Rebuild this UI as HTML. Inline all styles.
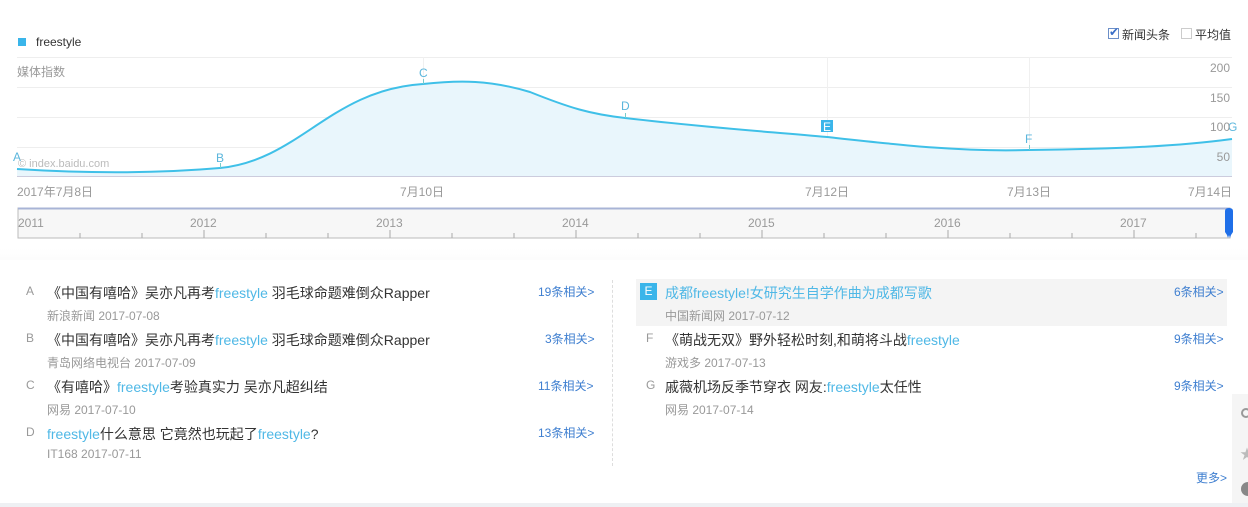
<!DOCTYPE html>
<html><head><meta charset="utf-8"><style>
body{margin:0;width:1248px;height:507px;overflow:hidden;background:#fff;font-family:"Liberation Sans","Noto Sans CJK SC",sans-serif;position:relative}
.a{position:absolute;white-space:nowrap}
.g{color:#999;font-size:12px}
.t{font-size:14px;color:#333}
.k{color:#4fb8e6}
.s{font-size:12px;color:#999}
.r{font-size:12px;color:#3f7fd0}
.L{font-size:12px;color:#999}
</style></head><body>
<div class="a" style="left:18px;top:38px;width:8px;height:8px;background:#3ab5ea"></div>
<div class="a" style="left:36px;top:35px;font-size:12px;color:#333">freestyle</div>
<div class="a" style="left:1108px;top:28px;width:11px;height:11px;border:1px solid #6c8fc8;box-sizing:border-box"></div>
<div class="a" style="left:1109px;top:25px;font-size:12px;color:#3a6fc8">✔</div>
<div class="a" style="left:1122px;top:26px;font-size:12px;color:#333">新闻头条</div>
<div class="a" style="left:1181px;top:28px;width:11px;height:11px;border:1px solid #ccc;box-sizing:border-box"></div>
<div class="a" style="left:1195px;top:26px;font-size:12px;color:#333">平均值</div>
<svg class="a" style="left:0;top:0" width="1248" height="250">
<g stroke="#eee" stroke-width="1">
<line x1="17" y1="57.5" x2="1232" y2="57.5"/><line x1="17" y1="87.5" x2="1232" y2="87.5"/>
<line x1="17" y1="117.5" x2="1232" y2="117.5"/><line x1="17" y1="147.5" x2="1232" y2="147.5"/>
</g>
<g stroke="#f0f0f0" stroke-width="1">
<line x1="423.5" y1="57" x2="423.5" y2="176"/><line x1="827.5" y1="57" x2="827.5" y2="176"/><line x1="1029.5" y1="57" x2="1029.5" y2="176"/>
</g>
<path d="M17 169 C80 173 150 174 220 168 C300 160 330 90 423 84 C460 80 490 80 530 92 C570 108 590 114 625 118 C700 127 760 131 827 137 C900 145 960 152 1029 150 C1120 149 1180 146 1232 139 L1232 176 L17 176Z" fill="#e9f6fc"/>
<path d="M17 169 C80 173 150 174 220 168 C300 160 330 90 423 84 C460 80 490 80 530 92 C570 108 590 114 625 118 C700 127 760 131 827 137 C900 145 960 152 1029 150 C1120 149 1180 146 1232 139" fill="none" stroke="#3fc0e8" stroke-width="2"/>
<line x1="17" y1="176.5" x2="1232" y2="176.5" stroke="#ccd" />
<g stroke="#7cc" stroke-width="1"><line x1="220.5" y1="163" x2="220.5" y2="168"/><line x1="423.5" y1="79" x2="423.5" y2="84"/><line x1="625.5" y1="113" x2="625.5" y2="118"/><line x1="1029.5" y1="145" x2="1029.5" y2="150"/></g>
<g font-size="12" fill="#5bb6dc" font-family="Liberation Sans"><text x="13" y="161">A</text><text x="216" y="162">B</text><text x="419" y="77">C</text><text x="621" y="110">D</text><text x="1025" y="143">F</text><text x="1228" y="131">G</text></g>
<rect x="821" y="120" width="12" height="12" fill="#3ab5ea"/><text x="823" y="131" font-size="12" fill="#fff" font-family="Liberation Sans">E</text>
<g font-size="12" fill="#999" font-family="Liberation Sans" text-anchor="end"><text x="1230" y="72">200</text><text x="1230" y="102">150</text><text x="1230" y="131">100</text><text x="1230" y="161">50</text></g>
<rect x="18" y="208" width="1212" height="30" fill="#f7f7f7" stroke="#bbb"/>
<line x1="18" y1="208.5" x2="1230" y2="208.5" stroke="#a8b4d6" stroke-width="2"/>
<g stroke="#aaa">
<path d="M80 238v-5M142 238v-5M266 238v-5M328 238v-5M452 238v-5M514 238v-5M638 238v-5M700 238v-5M824 238v-5M886 238v-5M1010 238v-5M1072 238v-5M1196 238v-5"/>
<path d="M204 238v-8M390 238v-8M576 238v-8M762 238v-8M948 238v-8M1134 238v-8"/>
</g>
<g font-size="12" fill="#999" font-family="Liberation Sans"><text x="18" y="227">2011</text><text x="190" y="227">2012</text><text x="376" y="227">2013</text><text x="562" y="227">2014</text><text x="748" y="227">2015</text><text x="934" y="227">2016</text><text x="1120" y="227">2017</text></g>
<path d="M1225 211 q0-3 4-3 q4 0 4 3 v21 l-2 3 -1 3 -1-3 -1 3 -1-3 -2-3z" fill="#1f6fe8"/>
</svg>
<div class="a g" style="left:17px;top:63px">媒体指数</div>
<div class="a" style="left:18px;top:158px;font-size:11px;color:#bbb">© index.baidu.com</div>
<div class="a g" style="left:17px;top:183px">2017年7月8日</div>
<div class="a g" style="left:400px;top:183px">7月10日</div>
<div class="a g" style="left:805px;top:183px">7月12日</div>
<div class="a g" style="left:1007px;top:183px">7月13日</div>
<div class="a g" style="left:1188px;top:183px">7月14日</div>
<div class="a" style="left:0;top:248px;width:1248px;height:12px;background:linear-gradient(#fff,#fcfcfc)"></div>

<div class="a" style="left:612px;top:280px;height:186px;border-left:1px dashed #ddd"></div>
<div class="a" style="left:636px;top:279px;width:591px;height:47px;background:#f4f4f4"></div>

<div class="a L" style="left:26px;top:284px">A</div>
<div class="a t" style="left:47px;top:283px">《中国有嘻哈》吴亦凡再考<span class="k">freestyle</span> 羽毛球命题难倒众Rapper</div>
<div class="a s" style="left:47px;top:307px">新浪新闻 2017-07-08</div>
<div class="a r" style="left:538px;top:283px">19条相关&gt;</div>
<div class="a L" style="left:26px;top:331px">B</div>
<div class="a t" style="left:47px;top:330px">《中国有嘻哈》吴亦凡再考<span class="k">freestyle</span> 羽毛球命题难倒众Rapper</div>
<div class="a s" style="left:47px;top:354px">青岛网络电视台 2017-07-09</div>
<div class="a r" style="left:545px;top:330px">3条相关&gt;</div>
<div class="a L" style="left:26px;top:378px">C</div>
<div class="a t" style="left:47px;top:377px">《有嘻哈》<span class="k">freestyle</span>考验真实力 吴亦凡超纠结</div>
<div class="a s" style="left:47px;top:401px">网易 2017-07-10</div>
<div class="a r" style="left:538px;top:377px">11条相关&gt;</div>
<div class="a L" style="left:26px;top:425px">D</div>
<div class="a t" style="left:47px;top:424px"><span class="k">freestyle</span>什么意思 它竟然也玩起了<span class="k">freestyle</span>?</div>
<div class="a s" style="left:47px;top:447px">IT168 2017-07-11</div>
<div class="a r" style="left:538px;top:424px">13条相关&gt;</div>

<div class="a" style="left:640px;top:283px;width:17px;height:17px;background:#3ab5ea;color:#fff;font-size:12px;text-align:center;line-height:17px">E</div>
<div class="a t k" style="left:665px;top:283px">成都freestyle!女研究生自学作曲为成都写歌</div>
<div class="a s" style="left:665px;top:307px">中国新闻网 2017-07-12</div>
<div class="a r" style="left:1174px;top:283px">6条相关&gt;</div>
<div class="a L" style="left:646px;top:331px">F</div>
<div class="a t" style="left:665px;top:330px">《萌战无双》野外轻松时刻,和萌将斗战<span class="k">freestyle</span></div>
<div class="a s" style="left:665px;top:354px">游戏多 2017-07-13</div>
<div class="a r" style="left:1174px;top:330px">9条相关&gt;</div>
<div class="a L" style="left:646px;top:378px">G</div>
<div class="a t" style="left:665px;top:377px">戚薇机场反季节穿衣 网友:<span class="k">freestyle</span>太任性</div>
<div class="a s" style="left:665px;top:401px">网易 2017-07-14</div>
<div class="a r" style="left:1174px;top:377px">9条相关&gt;</div>
<div class="a r" style="left:1196px;top:469px">更多&gt;</div>

<div class="a" style="left:1232px;top:394px;width:16px;height:110px;background:#f5f5f5"></div>
<div class="a" style="left:1241px;top:408px;width:6px;height:6px;border:2px solid #999;border-radius:50%"></div>
<div class="a" style="left:1240px;top:444px;color:#bbb;font-size:14px">★</div>
<div class="a" style="left:1241px;top:482px;width:14px;height:14px;background:#888;border-radius:50%"></div>
<div class="a" style="left:0;top:503px;width:1248px;height:4px;background:#eef0f3"></div>
</body></html>
